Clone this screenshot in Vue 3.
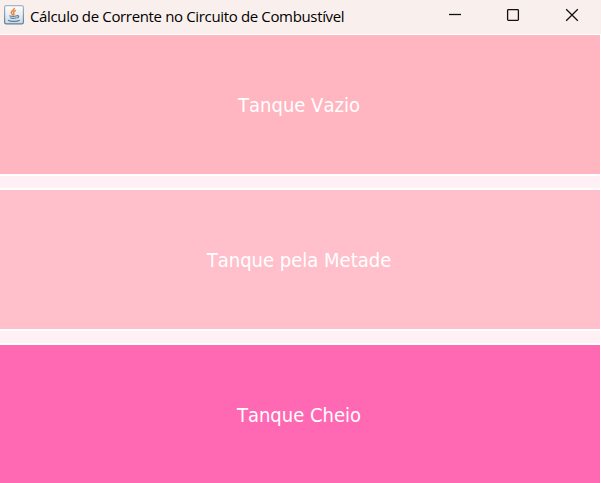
<script setup>
const buttons = [
  { label: 'Tanque Vazio', tone: 'empty' },
  { label: 'Tanque pela Metade', tone: 'half' },
  { label: 'Tanque Cheio', tone: 'full' },
]
</script>

<template>
  <div class="window">
    <header class="titlebar">
      <svg class="java" width="20" height="20" viewBox="0 0 20 20">
        <defs>
          <linearGradient id="tile" x1="0" y1="0" x2="0" y2="1">
            <stop offset="0" stop-color="#fdfdfe" />
            <stop offset="0.5" stop-color="#e9eef2" />
            <stop offset="1" stop-color="#cbd8e2" />
          </linearGradient>
          <linearGradient id="edge" x1="0" y1="0" x2="0" y2="1">
            <stop offset="0" stop-color="#a9b7c3" />
            <stop offset="1" stop-color="#5d7f9d" />
          </linearGradient>
        </defs>
        <rect x="0.6" y="0.6" width="18.8" height="18.2" rx="1.6" fill="url(#tile)" stroke="url(#edge)" stroke-width="1.2" />
        <path d="M10.4 2.8C10.8 5 6.9 5.8 7.3 7.8C7.5 8.8 8.5 9.3 9 10.2M12 5.4C9.7 6.4 9 7.2 9.8 8.3C10.4 9.2 9.8 9.8 9.4 10.3" fill="none" stroke="#ec8a3b" stroke-width="1.5" />
        <path d="M5.3 10.7C7.5 11.5 10.5 11.5 12.8 10.7M6 12.8C8 13.6 10.5 13.6 12.3 12.8M12.8 10.8C15.6 10.2 15.2 12.4 12.7 13.1M4 15.2C6.5 16.7 12.8 16.7 15.8 15.2" fill="none" stroke="#587f9f" stroke-width="1.2" />
      </svg>
      <h1 class="title">Cálculo de Corrente no Circuito de Combustível</h1>
      <nav class="controls">
        <svg width="14" height="14" viewBox="0 0 14 14"><path d="M1 6.5H13" /></svg>
        <svg width="14" height="14" viewBox="0 0 14 14"><rect x="1.6" y="1.6" width="10.8" height="10.8" rx="0.8" /></svg>
        <svg width="14" height="14" viewBox="0 0 14 14"><path d="M1.2 1.2L12.8 12.8M12.8 1.2L1.2 12.8" /></svg>
      </nav>
    </header>
    <main class="panel">
      <button v-for="b in buttons" :key="b.tone" class="tank" :class="b.tone">
        <span>{{ b.label }}</span>
      </button>
    </main>
  </div>
</template>

<style>
body {
  margin: 0;
  overflow: hidden;
}
</style>

<style scoped>
.window {
  box-sizing: border-box;
  width: 601px;
  height: 483px;
  overflow: hidden;
  display: flex;
  flex-direction: column;
  background: #fff;
}
.titlebar {
  flex: none;
  box-sizing: border-box;
  width: 601px;
  height: 34px;
  padding: 0 22px 0 4px;
  display: flex;
  align-items: flex-start;
  background: #f9f0ed;
}
.java {
  margin-top: 5px;
}
.title {
  margin: 5px 0 0 6px;
  font: 400 15px/22px "Open Sans", "Noto Sans", sans-serif;
  letter-spacing: -0.35px;
  white-space: nowrap;
  color: #000;
}
.controls {
  margin: 8px 0 0 auto;
  display: flex;
  gap: 45px;
}
.controls svg {
  fill: none;
  stroke: #111;
  stroke-width: 1.3;
}
.controls svg:nth-child(2) {
  margin-left: -1px;
}
.panel {
  flex: none;
  width: 600px;
  display: flex;
  flex-direction: column;
  gap: 12px;
  background: #fff0f5;
}
.tank {
  box-sizing: border-box;
  height: 143px;
  margin: 0;
  padding: 1px 2px 0 0;
  border: 0 solid #fff;
  border-width: 2px 0;
  display: flex;
  align-items: center;
  justify-content: center;
  font: 400 20px/24px "DejaVu Sans Condensed", "DejaVu Sans", sans-serif;
  font-kerning: none;
  color: #fff;
}
.empty {
  height: 142px;
  border-top-width: 1px;
  background: #ffb6c1;
}
.half {
  background: #ffc0cb;
}
.full {
  background: #ff69b4;
}
</style>
